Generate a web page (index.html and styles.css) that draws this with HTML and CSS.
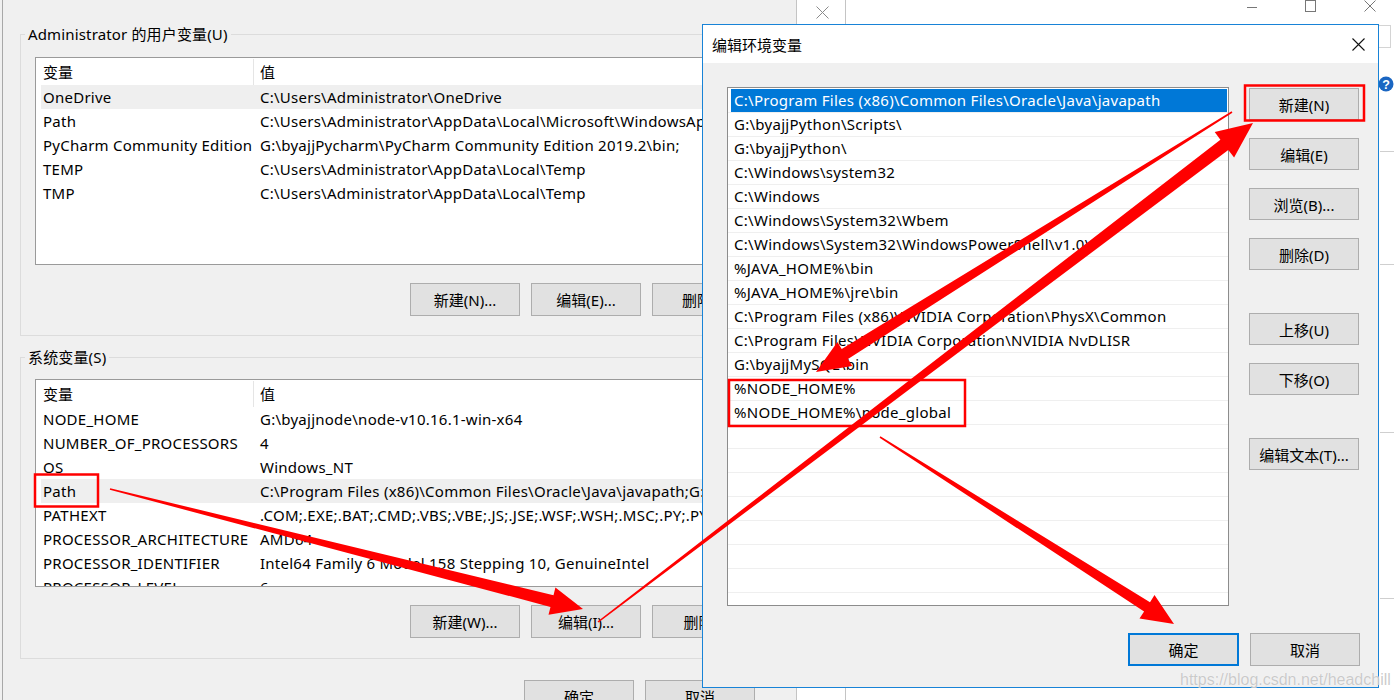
FILE: index.html
```html
<!DOCTYPE html>
<html lang="zh-CN">
<head>
    <meta charset="UTF-8">
    <meta name="viewport" content="width=device-width, initial-scale=1.0">
    <title>编辑环境变量</title>
    <link rel="stylesheet" href="styles.css">
</head>
<body>
    <div class="desktop">
        <div class="env-window">
            <fieldset class="group user-group">
                <legend>Administrator 的用户变量(U)</legend>
                <div class="var-list">
                    <div class="list-head"><span class="col-name">变量</span><span class="col-value">值</span></div>
                    <div class="list-row hover"><span class="col-name">OneDrive</span><span class="col-value">C:\Users\Administrator\OneDrive</span></div>
                    <div class="list-row"><span class="col-name">Path</span><span class="col-value">C:\Users\Administrator\AppData\Local\Microsoft\WindowsApps;</span></div>
                    <div class="list-row"><span class="col-name">PyCharm Community Edition</span><span class="col-value">G:\byajjPycharm\PyCharm Community Edition 2019.2\bin;</span></div>
                    <div class="list-row"><span class="col-name">TEMP</span><span class="col-value">C:\Users\Administrator\AppData\Local\Temp</span></div>
                    <div class="list-row"><span class="col-name">TMP</span><span class="col-value">C:\Users\Administrator\AppData\Local\Temp</span></div>
                </div>
                <div class="group-buttons">
                    <button class="win-btn">新建(N)...</button>
                    <button class="win-btn">编辑(E)...</button>
                    <button class="win-btn">删除(D)</button>
                </div>
            </fieldset>

            <fieldset class="group sys-group">
                <legend>系统变量(S)</legend>
                <div class="var-list">
                    <div class="list-head"><span class="col-name">变量</span><span class="col-value">值</span></div>
                    <div class="list-row"><span class="col-name">NODE_HOME</span><span class="col-value">G:\byajjnode\node-v10.16.1-win-x64</span></div>
                    <div class="list-row"><span class="col-name">NUMBER_OF_PROCESSORS</span><span class="col-value">4</span></div>
                    <div class="list-row"><span class="col-name">OS</span><span class="col-value">Windows_NT</span></div>
                    <div class="list-row hover"><span class="col-name">Path</span><span class="col-value">C:\Program Files (x86)\Common Files\Oracle\Java\javapath;G:\byajjPython\Scripts\</span></div>
                    <div class="list-row"><span class="col-name">PATHEXT</span><span class="col-value">.COM;.EXE;.BAT;.CMD;.VBS;.VBE;.JS;.JSE;.WSF;.WSH;.MSC;.PY;.PYW</span></div>
                    <div class="list-row"><span class="col-name">PROCESSOR_ARCHITECTURE</span><span class="col-value">AMD64</span></div>
                    <div class="list-row"><span class="col-name">PROCESSOR_IDENTIFIER</span><span class="col-value">Intel64 Family 6 Model 158 Stepping 10, GenuineIntel</span></div>
                    <div class="list-row"><span class="col-name">PROCESSOR_LEVEL</span><span class="col-value">6</span></div>
                </div>
                <div class="group-buttons">
                    <button class="win-btn">新建(W)...</button>
                    <button class="win-btn">编辑(I)...</button>
                    <button class="win-btn">删除(L)</button>
                </div>
            </fieldset>

            <div class="window-buttons">
                <button class="win-btn">确定</button>
                <button class="win-btn">取消</button>
            </div>
        </div>

        <div class="side-tab">
            <svg class="tab-close" width="13" height="13" viewBox="0 0 13 13"><path d="M0.5 0.5L12.5 12.5M12.5 0.5L0.5 12.5" stroke="#8a8a8a" stroke-width="1"/></svg>
        </div>

        <div class="other-window">
            <div class="other-titlebar">
                <svg class="ctl" width="10" height="13" viewBox="0 0 10 13"><path d="M0 7.5H10" stroke="#777" stroke-width="1"/></svg>
                <svg class="ctl" width="11" height="13" viewBox="0 0 11 13"><rect x="0.5" y="0.5" width="10" height="11" fill="none" stroke="#777" stroke-width="1"/></svg>
                <svg class="ctl" width="12" height="13" viewBox="0 0 12 13"><path d="M0.5 0.5L11.5 11.5M11.5 0.5L0.5 11.5" stroke="#777" stroke-width="1"/></svg>
            </div>
            <div class="other-content">
                <div class="right-strip">
                    <div class="search-stub"></div>
                    <svg class="help-icon" width="16" height="16" viewBox="0 0 16 16">
                        <circle cx="8" cy="8" r="7.5" fill="#1a66c2"/>
                        <text x="8" y="12.6" text-anchor="middle" font-size="12.5" font-weight="bold" fill="#fff" font-family="Liberation Sans, sans-serif">?</text>
                    </svg>
                    <div class="strip-line first"></div>
                    <div class="strip-line second"></div>
                    <div class="strip-line third"></div>
                    <div class="strip-line fourth"></div>
                </div>
            </div>
        </div>
    </div>

    <div class="dialog">
        <div class="dialog-title">
            <span>编辑环境变量</span>
            <svg width="13" height="13" viewBox="0 0 13 13"><path d="M0.5 0.5L12.5 12.5M12.5 0.5L0.5 12.5" stroke="#111" stroke-width="1.1"/></svg>
        </div>
        <div class="dialog-body">
            <div class="dialog-main">
                <div class="path-list">
                    <div class="path-row selected"><span class="path-text">C:\Program Files (x86)\Common Files\Oracle\Java\javapath</span></div>
                    <div class="path-row"><span class="path-text">G:\byajjPython\Scripts\</span></div>
                    <div class="path-row"><span class="path-text">G:\byajjPython\</span></div>
                    <div class="path-row"><span class="path-text">C:\Windows\system32</span></div>
                    <div class="path-row"><span class="path-text">C:\Windows</span></div>
                    <div class="path-row"><span class="path-text">C:\Windows\System32\Wbem</span></div>
                    <div class="path-row"><span class="path-text">C:\Windows\System32\WindowsPowerShell\v1.0\</span></div>
                    <div class="path-row"><span class="path-text">%JAVA_HOME%\bin</span></div>
                    <div class="path-row"><span class="path-text">%JAVA_HOME%\jre\bin</span></div>
                    <div class="path-row"><span class="path-text">C:\Program Files (x86)\NVIDIA Corporation\PhysX\Common</span></div>
                    <div class="path-row"><span class="path-text">C:\Program Files\NVIDIA Corporation\NVIDIA NvDLISR</span></div>
                    <div class="path-row"><span class="path-text">G:\byajjMySQL\bin</span></div>
                    <div class="path-row"><span class="path-text">%NODE_HOME%</span></div>
                    <div class="path-row"><span class="path-text">%NODE_HOME%\node_global</span></div>
                    <div class="path-row"></div>
                    <div class="path-row"></div>
                    <div class="path-row"></div>
                    <div class="path-row"></div>
                    <div class="path-row"></div>
                    <div class="path-row"></div>
                    <div class="path-row"></div>
                    <div class="path-row"></div>
                </div>
                <div class="side-buttons">
                    <button class="win-btn">新建(N)</button>
                    <button class="win-btn">编辑(E)</button>
                    <button class="win-btn">浏览(B)...</button>
                    <button class="win-btn">删除(D)</button>
                    <button class="win-btn spaced">上移(U)</button>
                    <button class="win-btn">下移(O)</button>
                    <button class="win-btn spaced">编辑文本(T)...</button>
                </div>
            </div>
            <div class="dialog-footer">
                <button class="win-btn default">确定</button>
                <button class="win-btn">取消</button>
            </div>
        </div>
    </div>

    <!-- red marks drawn on top of the screenshot -->
    <svg class="annotations" width="1394" height="700" viewBox="0 0 1394 700">
        <g fill="none" stroke="#ff0000" stroke-width="2.5">
            <rect x="35" y="474.5" width="63" height="32"/>
            <rect x="729" y="380" width="236" height="46"/>
            <rect x="1245" y="85.5" width="119" height="35"/>
        </g>
        <g fill="#ff0000">
            <polygon points="109.8,489.8 550.5,606.9 548.5,614.7 583,609 555.4,587.6 553.5,595.3 110.2,488.2"/>
            <polygon points="598.5,622.6 1228.3,150.0 1234.1,157.5 1253,123 1214.7,132.1 1220.4,139.7 597.5,621.4"/>
            <polygon points="1231.6,111.3 841.7,348.9 837.4,342.1 816,372 852.3,365.9 848.0,359.1 1232.4,112.7"/>
            <polygon points="879.6,437.7 1144.1,611.5 1139.5,618.6 1174,624 1154.5,595.0 1150.0,602.2 880.4,436.3"/>
        </g>
    </svg>

    <div class="watermark">https://blog.csdn.net/headchill</div>
</body>
</html>
```

FILE: styles.css
```css
* {
    box-sizing: border-box;
}
body {
    margin: 0;
    width: 1394px;
    height: 700px;
    overflow: hidden;
    position: relative;
    background: #f0f0f0;
    font-family: "Noto Sans", "Noto Sans CJK SC", sans-serif;
    font-size: 15px;
    color: #000;
}
.desktop {
    display: flex;
    height: 700px;
}

/* background window: 环境变量 */
.env-window {
    width: 794px;
    flex: none;
    margin-left: 2px;
    border-left: 1px solid #a8a8a8;
    padding: 24px 0 0 17px;
}
.group {
    width: 757px;
    margin: 0;
    padding: 0 0 19px 0;
    border: 1px solid #dcdcdc;
}
.group legend {
    margin-left: 4px;
    padding: 0 3px;
    line-height: 20px;
    letter-spacing: 0.15px;
}
.sys-group {
    margin-top: 11px;
    padding-bottom: 20px;
}
.var-list {
    margin: 13px 0 0 14px;
    width: 727px;
    height: 208px;
    border: 1px solid #9a9a9a;
    background: #fff;
    overflow: hidden;
}
.sys-group .var-list {
    margin-top: 12px;
}
.list-head {
    display: flex;
    align-items: center;
    height: 27px;
    padding-left: 5px;
}
.list-head .col-name {
    width: 213px;
    height: 26px;
    line-height: 26px;
    padding-left: 2px;
    border-right: 1px solid #e5e5e5;
}
.list-head .col-value {
    padding-left: 6px;
}
.list-row {
    display: flex;
    align-items: center;
    height: 24px;
    margin-left: 5px;
    white-space: nowrap;
    letter-spacing: 0.25px;
}
.list-row.hover {
    background: #efefef;
}
.col-name {
    width: 217px;
    flex: none;
    padding-left: 2px;
    white-space: nowrap;
}
.col-value {
    padding-left: 2px;
    white-space: nowrap;
}
.group-buttons {
    display: flex;
    justify-content: flex-end;
    gap: 11px;
    width: 727px;
    margin: 18px 0 0 14px;
}
.win-btn {
    width: 110px;
    height: 33px;
    padding: 0;
    background: #e1e1e1;
    border: 1px solid #adadad;
    font-family: inherit;
    font-size: 15px;
    color: #000;
}
.window-buttons {
    display: flex;
    justify-content: flex-end;
    gap: 11px;
    margin-top: 21px;
    padding-right: 41px;
}

/* strip and window behind the dialog */
.side-tab {
    width: 50px;
    flex: none;
    background: #fff;
    border-left: 1px solid #c4c4c4;
    border-right: 1px solid #c4c4c4;
    display: flex;
    justify-content: center;
    padding-top: 6px;
    padding-left: 3px;
}
.tab-close {
    display: block;
}
.other-window {
    flex: 1;
    background: #fff;
    display: flex;
    flex-direction: column;
}
.other-titlebar {
    height: 24px;
    display: flex;
    justify-content: flex-end;
    padding-right: 18px;
}
.ctl {
    display: block;
    margin-left: 48px;
}
.other-content {
    flex: 1;
    display: flex;
    justify-content: flex-end;
}
.right-strip {
    width: 16px;
}
.search-stub {
    width: 13px;
    height: 23px;
    margin-top: 1px;
    border: 1px solid #d4d4d4;
    border-left: none;
}
.help-icon {
    display: block;
    margin-top: 28px;
}
.strip-line {
    height: 1px;
    margin-left: 2px;
    background: #cfcfcf;
}
.strip-line.first { margin-top: 59px; }
.strip-line.second { margin-top: 112px; }
.strip-line.third { margin-top: 167px; }
.strip-line.fourth { margin-top: 165px; }

/* dialog: 编辑环境变量 */
.dialog {
    position: absolute;
    left: 702px;
    top: 24px;
    width: 677px;
    height: 664px;
    border: 1px solid #1883d7;
    background: #f0f0f0;
}
.dialog-title {
    height: 38px;
    background: #fff;
    display: flex;
    align-items: center;
    justify-content: space-between;
    padding: 0 13px 0 9px;
}
.dialog-title svg {
    display: block;
}
.dialog-body {
    padding: 24px 0 0 24px;
}
.dialog-main {
    display: flex;
    gap: 20px;
    height: 519px;
}
.path-list {
    width: 502px;
    height: 519px;
    border: 1px solid #8c8c8c;
    background: #fff;
    padding-top: 1px;
    overflow: hidden;
}
.path-row {
    height: 24px;
    padding: 0 1px 0 3px;
    border-bottom: 1px solid #efefef;
}
.path-text {
    display: block;
    height: 23px;
    line-height: 23px;
    padding-left: 3px;
    white-space: nowrap;
    letter-spacing: 0.28px;
}
.path-row.selected .path-text {
    background: #0078d7;
    color: #fff;
}
.side-buttons {
    width: 110px;
    display: flex;
    flex-direction: column;
    gap: 18px;
    padding-top: 1px;
}
.side-buttons .win-btn {
    height: 32px;
}
.side-buttons .spaced {
    margin-top: 25px;
}
.dialog-footer {
    display: flex;
    justify-content: flex-end;
    gap: 11px;
    margin-top: 27px;
    padding-right: 18px;
}
.win-btn.default {
    width: 111px;
    border: 2px solid #0078d7;
}

/* overlays */
.annotations {
    position: absolute;
    left: 0;
    top: 0;
    pointer-events: none;
}
.watermark {
    position: absolute;
    left: 1180px;
    top: 671px;
    font-family: "Liberation Sans", sans-serif;
    font-size: 16px;
    color: rgba(185, 185, 185, 0.75);
    text-shadow: 0 0 1px #fff;
    white-space: nowrap;
}
```
